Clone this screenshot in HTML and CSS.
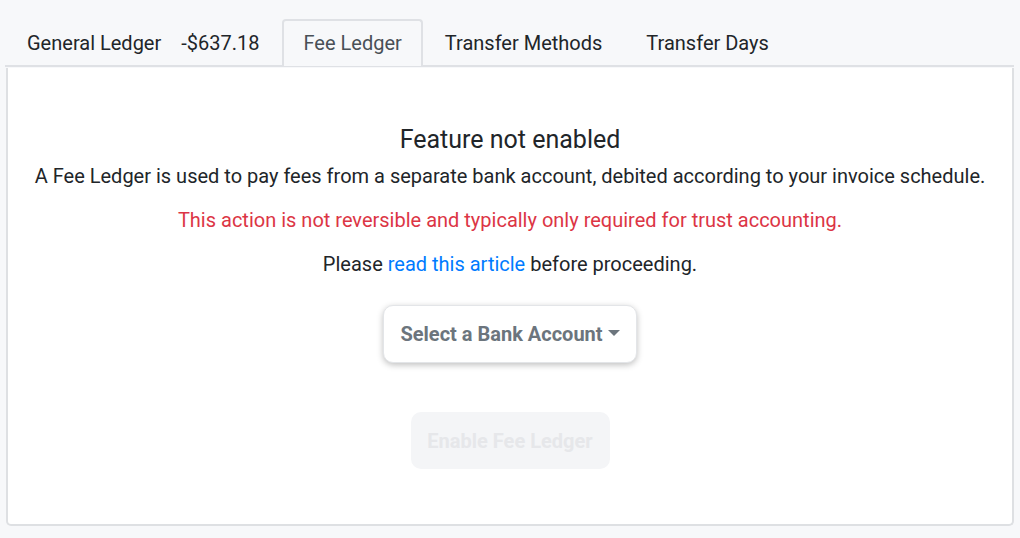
FILE: index.html
```html
<!DOCTYPE html>
<html><head><title>Fee Ledger</title><meta charset="utf-8">
<link rel="stylesheet" href="styles.css">
</head>
<body>
    <ul class="tabs">
        <li class="tab"><span>General Ledger</span><span class="saldo">-$637.18</span></li>
        <li class="tab activa">Fee Ledger</li>
        <li class="tab">Transfer Methods</li>
        <li class="tab">Transfer Days</li>
    </ul>
    <div class="panel">
        <h2 class="titulo">Feature not enabled</h2>
        <p class="texto">A Fee Ledger is used to pay fees from a separate bank account, debited according to your invoice schedule.</p>
        <p class="aviso">This action is not reversible and typically only required for trust accounting.</p>
        <p class="texto">Please <a href="#">read this article</a> before proceeding.</p>
        <button class="desplegable" type="button">Select a Bank Account <span class="flecha"></span></button>
        <button class="habilitar" type="button" disabled>Enable Fee Ledger</button>
    </div>
</body>
</html>
```

FILE: styles.css
```css
body {margin:0; background:#f7f8fa; font-family: Roboto, "Liberation Sans", sans-serif; color:#212529;}
.tabs {list-style:none; margin:0 6px 0 5px; padding:19px 0 0 0; display:flex; border-bottom:2px solid #dfe1e5; height:46px; box-sizing:content-box;}
.tab {font-size:20px; padding:11px 21px 0 21px; height:35px; border:1px solid transparent; border-bottom:none; border-radius:4px 4px 0 0; display:flex; gap:20px;}
.tab.activa {color:#495057; border-color:#dfe1e5; border-width:2px 2px 0 2px; background:#f7f8fa; padding:10px 19px 0 20px; margin-bottom:-2px;}
.saldo {color:#212529;}
.panel {margin:1px 6px 0 6px; height:456px; background:#fff; border:2px solid #dee0e3; border-top:none; border-radius:0 0 5px 5px; display:flex; flex-direction:column; align-items:center;}
.titulo {font-size:25px; font-weight:400; margin:56px 0 0 0; line-height:32px;}
.texto {font-size:20px; margin:6px 0 0 0; line-height:28px;}
.aviso {font-size:20px; color:#dc3545; margin:16px 0 0 0; line-height:28px;}
.aviso + .texto {margin-top:16px;}
a {color:#007bff; text-decoration:none;}
.desplegable {margin-top:27px; font-family:inherit; font-size:20px; font-weight:700; color:#6c757d; background:#fff; border:1px solid #e3e5e8; border-radius:10px; width:254px; height:58px; box-shadow:0 2px 6px rgba(0,0,0,0.25); display:flex; align-items:center; justify-content:center; gap:5px; padding:0;}
.flecha {display:inline-block; width:0; height:0; border-left:6px solid transparent; border-right:6px solid transparent; border-top:6px solid #6c757d; margin-top:-2px;}
.habilitar {margin-top:49px; font-family:inherit; font-size:20px; font-weight:700; color:#e6e7ea; background:#f4f5f7; border:none; border-radius:10px; width:199px; height:57px;}
```
